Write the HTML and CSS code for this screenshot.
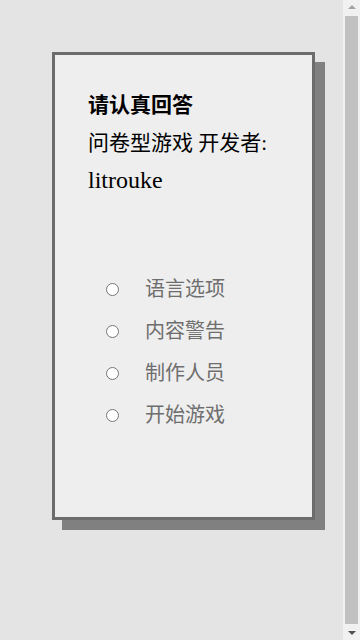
FILE: index.html
```html
<!DOCTYPE html>
<html lang="zh">
<head>
<meta charset="utf-8">
<title>请认真回答</title>
<link rel="stylesheet" href="styles.css">
</head>
<body>
<div class="page">
  <div class="card">
    <div class="intro">
      <div class="title">请认真回答</div>
      <div class="sub">问卷型游戏 开发者:</div>
      <div class="sub latin">litrouke</div>
    </div>
    <ul class="options">
      <li class="option"><span class="radio"></span><span class="label">语言选项</span></li>
      <li class="option"><span class="radio"></span><span class="label">内容警告</span></li>
      <li class="option"><span class="radio"></span><span class="label">制作人员</span></li>
      <li class="option"><span class="radio"></span><span class="label">开始游戏</span></li>
    </ul>
  </div>
</div>
<div class="scrollbar">
  <span class="arrow up"></span>
  <span class="thumb"></span>
  <span class="arrow down"></span>
</div>
</body>
</html>
```

FILE: styles.css
```css
html, body {
  margin: 0;
  padding: 0;
  background: #e4e4e4;
}

body {
  font-family: "Liberation Serif", "Noto Sans CJK SC", serif;
  color: #000;
}

.page {
  padding: 52px 0 126px 52px;
}

.card {
  box-sizing: border-box;
  width: 263px;
  height: 468px;
  background: #eeeeee;
  border: 3px solid #6c6c6c;
  box-shadow: 10px 10px 0 #808080;
  padding: 32px 0 0 33px;
}

.intro {
  font-size: 21px;
  line-height: 37.5px;
}

.title {
  font-weight: bold;
}

.latin {
  font-size: 24px;
  line-height: 36px;
}

.options {
  list-style: none;
  margin: 69px 0 0 0;
  padding: 0 0 0 18px;
}

.option {
  display: flex;
  align-items: center;
  height: 42px;
}

.radio {
  box-sizing: border-box;
  width: 13px;
  height: 13px;
  margin-top: 2px;
  border: 1px solid #767676;
  border-radius: 50%;
  background: #fff;
  flex: none;
}

.label {
  margin-left: 26px;
  font-family: "Noto Sans CJK SC", sans-serif;
  font-size: 20px;
  line-height: 42px;
  color: #6e6e6e;
}

.scrollbar {
  position: fixed;
  top: 0;
  right: 0;
  width: 17px;
  height: 100%;
  background: #f1f1f1;
  display: flex;
  flex-direction: column;
  align-items: center;
}

.thumb {
  display: block;
  width: 13px;
  flex: 1;
  margin: 2px 0;
  background: #c1c1c1;
}

.arrow {
  display: block;
  width: 0;
  height: 0;
  margin: 5px 0;
  border-left: 4px solid transparent;
  border-right: 4px solid transparent;
}

.arrow.up {
  border-bottom: 4px solid #a3a3a3;
}

.arrow.down {
  border-top: 4px solid #505050;
}
```
